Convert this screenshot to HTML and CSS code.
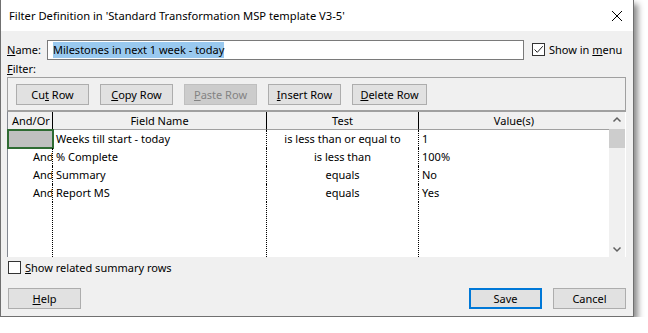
FILE: index.html
```html
<!DOCTYPE html>
<html lang="en">
<head>
  <meta charset="UTF-8" />
  <title>Filter Definition</title>
  <link rel="stylesheet" href="styles.css">
</head>
<body>
  <div class="dialog">
    <div class="titlebar">
      <span class="title">Filter Definition in 'Standard Transformation MSP template V3-5'</span>
      <svg class="close" width="12" height="12" viewBox="0 0 12 12">
        <path d="M1 1 L11 11 M11 1 L1 11" stroke="#000" stroke-width="1" fill="none"/>
      </svg>
    </div>

    <div class="content">
      <div class="name-row">
        <label class="name-label"><u>N</u>ame:</label>
        <div class="name-input"><span class="sel">Milestones in next 1 week - today</span></div>
        <label class="check">
          <span class="box checked">
            <svg width="11" height="11" viewBox="0 0 11 11"><path d="M1.5 5.5 L4.3 8.3 L9.8 2.2" stroke="#222" stroke-width="1" fill="none"/></svg>
          </span>
          <span>Show in <u>m</u>enu</span>
        </label>
      </div>

      <div class="filter-label"><u>F</u>ilter:</div>

      <div class="toolbar">
        <button class="btn">Cu<u>t</u> Row</button>
        <button class="btn"><u>C</u>opy Row</button>
        <button class="btn disabled"><u>P</u>aste Row</button>
        <button class="btn"><u>I</u>nsert Row</button>
        <button class="btn wide"><u>D</u>elete Row</button>
      </div>

      <div class="grid-wrap">
        <div class="grid">
          <div class="hd left">And/Or</div>
          <div class="hd">Field Name</div>
          <div class="hd">Test</div>
          <div class="hd last">Value(s)</div>

          <div class="cell andor current"></div>
          <div class="cell">Weeks till start - today</div>
          <div class="cell center">is less than or equal to</div>
          <div class="cell">1</div>

          <div class="cell andor">And</div>
          <div class="cell">% Complete</div>
          <div class="cell center">is less than</div>
          <div class="cell">100%</div>

          <div class="cell andor">And</div>
          <div class="cell">Summary</div>
          <div class="cell center">equals</div>
          <div class="cell">No</div>

          <div class="cell andor">And</div>
          <div class="cell">Report MS</div>
          <div class="cell center">equals</div>
          <div class="cell">Yes</div>

          <div class="cell filler"></div>
          <div class="cell filler"></div>
          <div class="cell filler"></div>
          <div class="cell filler"></div>
        </div>
        <div class="scrollbar">
          <svg width="16" height="16" viewBox="0 0 16 16"><path d="M4.5 9.5 L8 6 L11.5 9.5" stroke="#606060" stroke-width="1.5" fill="none"/></svg>
          <div class="thumb"></div>
          <div class="track"></div>
          <svg width="16" height="16" viewBox="0 0 16 16"><path d="M4.5 6.5 L8 10 L11.5 6.5" stroke="#606060" stroke-width="1.5" fill="none"/></svg>
        </div>
      </div>

      <label class="check summary">
        <span class="box"></span>
        <span><u>S</u>how related summary rows</span>
      </label>

      <div class="footer">
        <button class="btn"><u>H</u>elp</button>
        <div class="spacer"></div>
        <button class="btn default">Save</button>
        <button class="btn">Cancel</button>
      </div>
    </div>
  </div>
</body>
</html>
```

FILE: styles.css
```css
body {
  margin: 0;
  background: #ffffff;
  font-family: "Noto Sans", "Open Sans", sans-serif;
  font-size: 11px;
  color: #000;
}

.dialog {
  width: 632px;
  height: 316px;
  background: #f0f0f0;
  border: 1px solid #707070;
  border-top: none;
  box-shadow: 4px 4px 6px rgba(0, 0, 0, 0.45);
  display: flex;
  flex-direction: column;
}

.titlebar {
  height: 31px;
  background: #ffffff;
  display: flex;
  align-items: center;
  padding: 0 10px 0 8px;
}

.title {
  flex: 1;
  font-size: 11.2px;
}

.content {
  padding: 0 7px 0 6px;
  display: flex;
  flex-direction: column;
}

.name-row {
  display: flex;
  align-items: center;
  margin-top: 8px;
  height: 21px;
}

.name-label {
  width: 40px;
}

.name-input {
  width: 477px;
  height: 20px;
  border: 1px solid #7a7a7a;
  background: #fff;
  display: flex;
  align-items: center;
  padding-left: 5px;
  box-sizing: border-box;
}

.sel {
  background: #99c9ef;
  line-height: 16px;
}

.check {
  display: flex;
  align-items: center;
  gap: 4px;
  margin-left: 8px;
  white-space: nowrap;
  flex-shrink: 0;
}

.box {
  width: 11px;
  height: 11px;
  border: 1px solid #333;
  background: #fff;
  display: flex;
  align-items: center;
  justify-content: center;
}

.filter-label {
  height: 17px;
  line-height: 17px;
}

.toolbar {
  height: 32px;
  border: 1px solid #a0a0a0;
  display: flex;
  align-items: center;
  gap: 11px;
  padding: 0 8px;
}

.btn {
  font-family: inherit;
  font-size: 11px;
  width: 73px;
  height: 21px;
  padding: 0;
  background: #e1e1e1;
  border: 1px solid #adadad;
  color: #000;
}

.btn.wide {
  width: 75px;
}

.btn.disabled {
  background: #cccccc;
  border-color: #bfbfbf;
  color: #838383;
}

.btn.default {
  border: 2px solid #0078d7;
}

.grid-wrap {
  height: 145px;
  border-left: 1px solid #828790;
  border-top: 1px solid #a0a0a0;
  display: flex;
  background: #fff;
}

.grid {
  display: grid;
  grid-template-columns: 45px 214px 152px 190px;
  grid-template-rows: 18px 18px 18px 18px 18px 1fr;
}

.hd {
  background: #f0f0f0;
  border-right: 1px solid #000;
  border-bottom: 1px solid #a0a0a0;
  text-align: center;
  line-height: 17px;
}

.hd.left {
  text-align: left;
  padding-left: 4px;
}

.hd.last {
  border-right: none;
}

.cell {
  border-right: 1px dotted #000;
  line-height: 18px;
  padding-left: 3px;
  white-space: nowrap;
  overflow: hidden;
}

.cell:nth-child(4n) {
  border-right: none;
}

.cell.center {
  text-align: center;
  padding-left: 0;
}

.cell.andor {
  padding-left: 25px;
}

.cell.current {
  background: #c0c0c0;
  outline: 2px solid #2f6b33;
  outline-offset: -1px;
}

.scrollbar {
  width: 16px;
  background: #f0f0f0;
  display: flex;
  flex-direction: column;
}

.thumb {
  height: 19px;
  background: #cdcdcd;
  margin-top: 1px;
}

.track {
  flex: 1;
}

.summary {
  margin: 4px 0 0 1px;
  height: 13px;
}

.footer {
  display: flex;
  align-items: center;
  gap: 11px;
  margin-top: 14px;
  padding-left: 1px;
}

.spacer {
  flex: 1;
}
```
